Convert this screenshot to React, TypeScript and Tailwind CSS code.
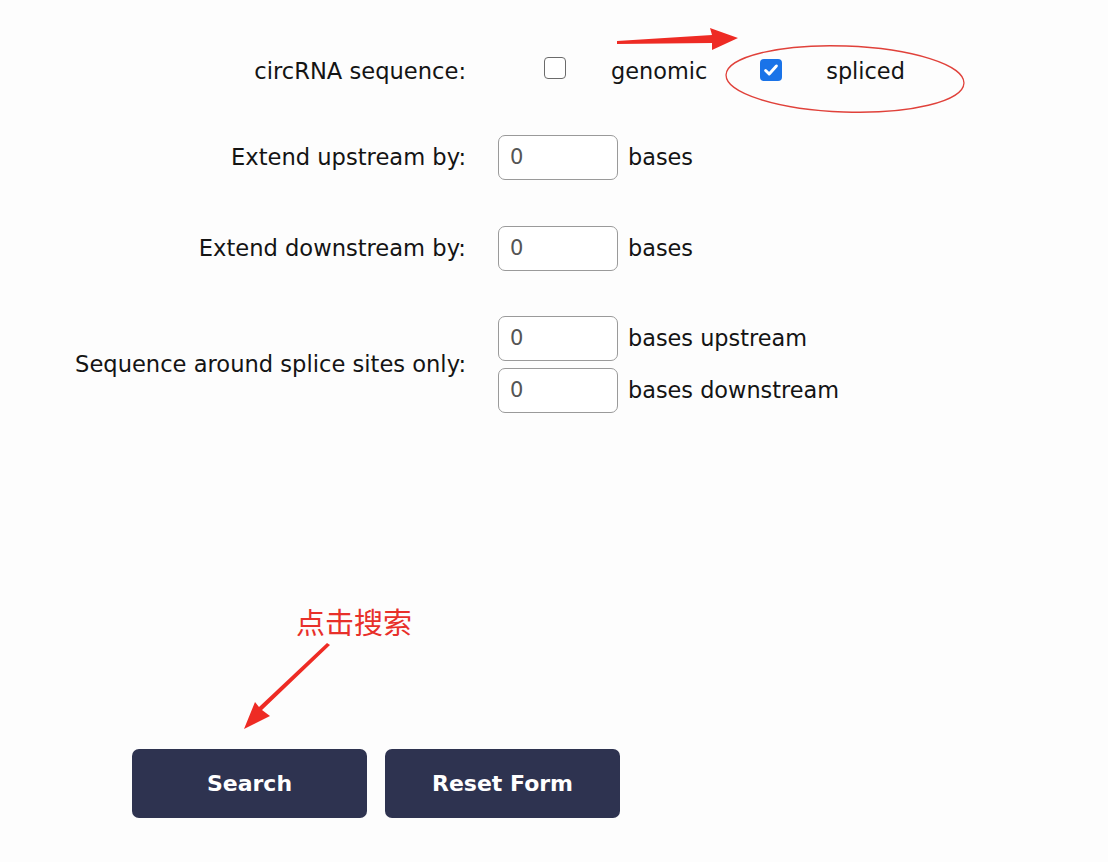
import React from 'react'

const font = { fontFamily: '"DejaVu Sans", Verdana, sans-serif' }

function Box({ checked }: { checked?: boolean }) {
  // native-looking checkbox, drawn so the colours hold in the headless browser
  return checked ? (
    <span className="inline-flex h-[22px] w-[22px] items-center justify-center rounded-[4px] bg-[#1a73e8]">
      <svg viewBox="0 0 16 16" className="h-[18px] w-[18px]">
        <path d="M3.2 8.4l3.2 3.2 6.4-7.2" fill="none" stroke="#fff" strokeWidth="2.6" strokeLinecap="round" strokeLinejoin="round" />
      </svg>
    </span>
  ) : (
    <span className="inline-block h-[22px] w-[22px] rounded-[4px] border-[1.5px] border-[#6b6b6b] bg-white" />
  )
}

function NumInput() {
  return (
    <div className="flex h-[45px] w-[120px] items-center rounded-[7px] border border-[#9a9a9a] bg-white pl-[11px] text-[21px] text-[#555]">
      0
    </div>
  )
}

function Row({ label, children, className }: { label: string; children: React.ReactNode; className?: string }) {
  return (
    <div className={`flex items-center ${className ?? ''}`}>
      <div className="w-[466px] text-right text-[22.6px] text-[#141414]">{label}</div>
      <div className="ml-[32px]">{children}</div>
    </div>
  )
}

export default function App() {
  return (
    <div className="relative h-[862px] w-[1108px] overflow-hidden bg-[#fdfdfd]" style={font}>
      <div className="flex flex-col pt-[50px]">
        <Row label="circRNA sequence:" className="h-[44px]">
          <div className="flex items-center text-[22.4px] text-[#141414]">
            <span className="ml-[46px]"><Box /></span>
            <span className="ml-[45px]">genomic</span>
            <span className="ml-[53px]"><Box checked /></span>
            <span className="ml-[44px]">spliced</span>
          </div>
        </Row>

        <Row label="Extend upstream by:" className="mt-[41px]">
          <div className="flex items-center gap-[10px] text-[22.4px] text-[#141414]">
            <NumInput />
            <span>bases</span>
          </div>
        </Row>

        <Row label="Extend downstream by:" className="mt-[46px]">
          <div className="flex items-center gap-[10px] text-[22.4px] text-[#141414]">
            <NumInput />
            <span>bases</span>
          </div>
        </Row>

        <Row label="Sequence around splice sites only:" className="mt-[45px]">
          <div className="flex flex-col gap-[7px] text-[22.4px] text-[#141414]">
            <div className="flex items-center gap-[10px]">
              <NumInput />
              <span>bases upstream</span>
            </div>
            <div className="flex items-center gap-[10px]">
              <NumInput />
              <span>bases downstream</span>
            </div>
          </div>
        </Row>

        <div className="ml-[132px] mt-[336px] flex gap-[18px]">
          <button className="h-[69px] w-[235px] rounded-[7px] bg-[#2e3350] text-[22px] font-bold text-white">Search</button>
          <button className="h-[69px] w-[235px] rounded-[7px] bg-[#2e3350] text-[22px] font-bold text-white">Reset Form</button>
        </div>
      </div>

      {/* annotations drawn over the form */}
      <svg className="pointer-events-none absolute inset-0" width="1108" height="862">
        <polygon points="617,41 712,35 710,28 738,38 712,50 712,43 617,44" fill="#ee2b24" />
        <ellipse cx="845" cy="79" rx="119" ry="33" fill="none" stroke="#e0413a" strokeWidth="1.3" transform="rotate(2 845 79)" />
        <polygon points="330,645 262,710 270,716 244,729 255,702 259,707 327,643" fill="#ee2b24" />
      </svg>
      <div
        className="absolute left-[296px] top-[600px] text-[29px] text-[#e8302a]"
        style={{ fontFamily: '"Noto Sans CJK SC", sans-serif' }}
      >
        点击搜索
      </div>
    </div>
  )
}
